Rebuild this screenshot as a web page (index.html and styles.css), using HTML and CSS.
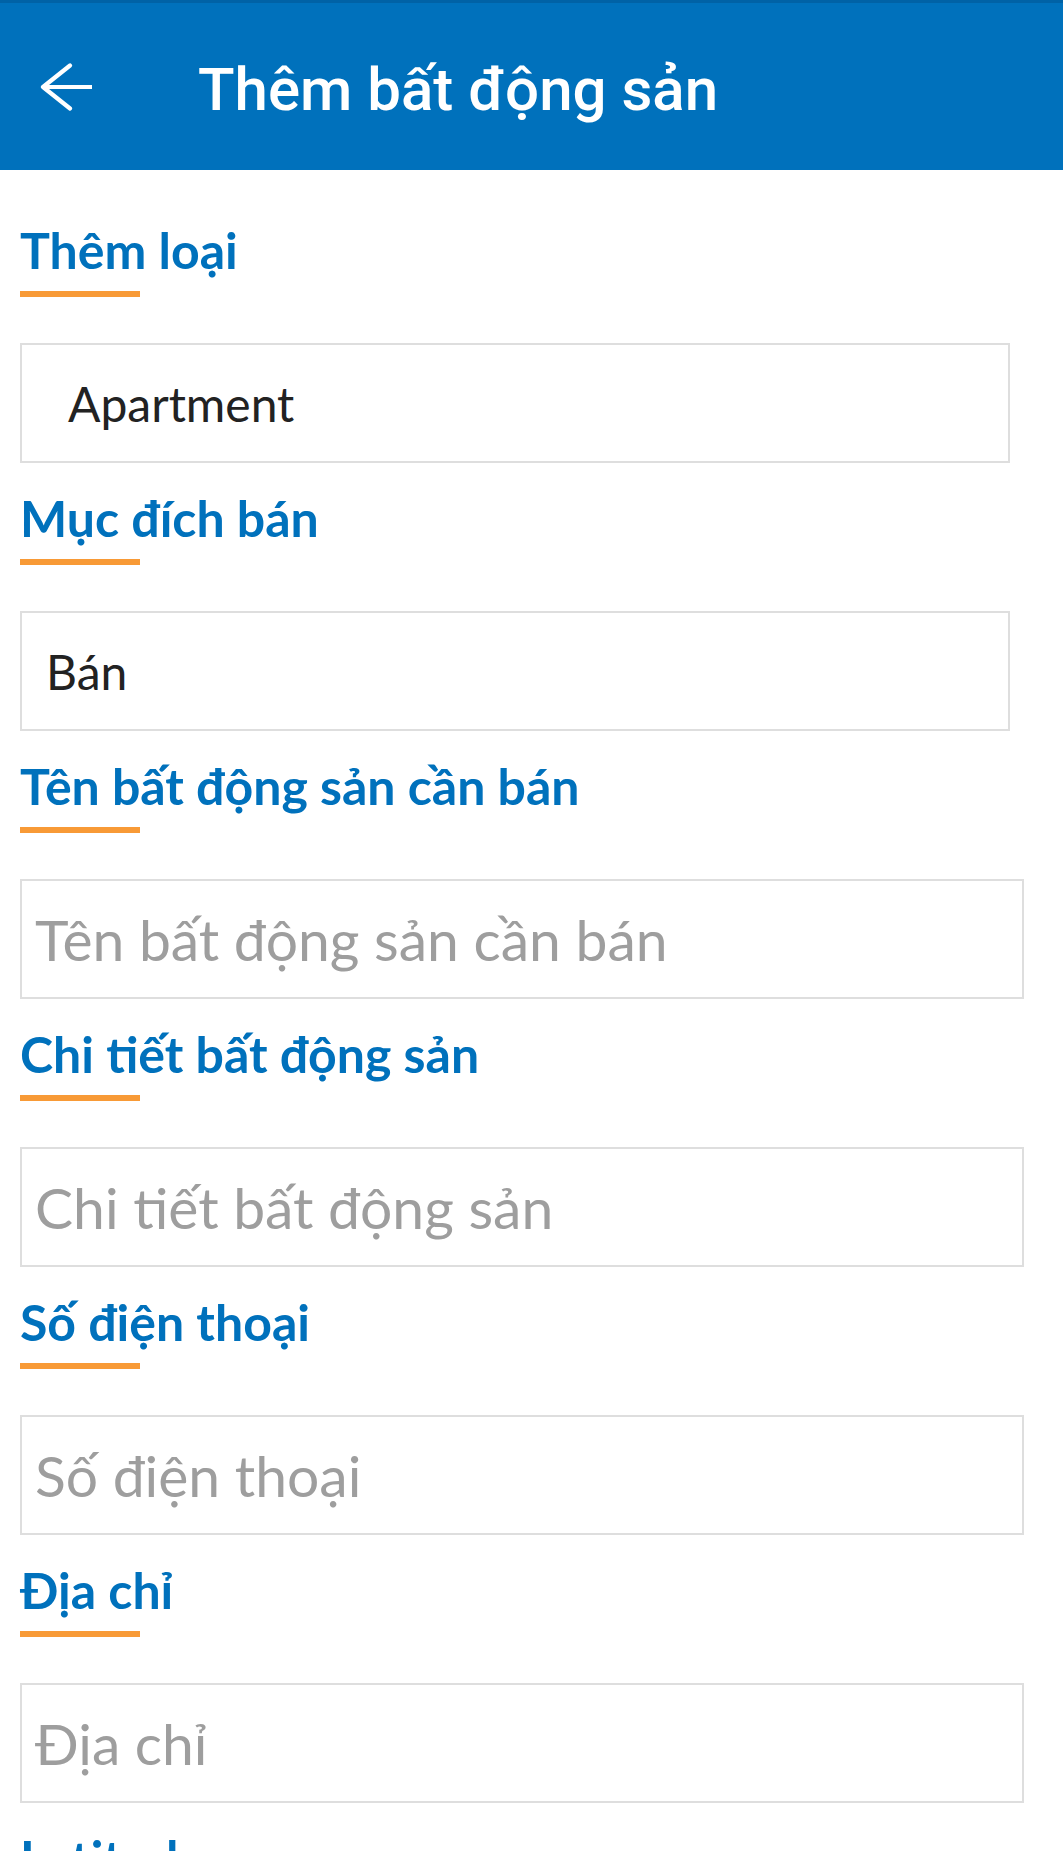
FILE: index.html
```html
<!DOCTYPE html>
<html lang="vi">
<head>
    <meta charset="UTF-8">
    <meta name="viewport" content="width=device-width, initial-scale=1.0">
    <title>Thêm bất động sản</title>
    <link rel="stylesheet" href="styles.css">
</head>
<body>
    <div class="screen">
        <header class="toolbar">
            <button class="back" aria-label="Quay lại">
                <svg width="56" height="56" viewBox="0 0 56 56">
                    <path d="M34 6.5 L7 28 L34 49.5 M8 28 H55" fill="none" stroke="#fff" stroke-width="4.2" stroke-linecap="round" stroke-linejoin="round"/>
                </svg>
            </button>
            <h1 class="title">Thêm bất động sản</h1>
        </header>

        <main class="form">
            <section class="field">
                <h2 class="label">Thêm loại</h2>
                <div class="bar"></div>
                <div class="box box-select"><span class="value value-indent">Apartment</span></div>
            </section>

            <section class="field">
                <h2 class="label">Mục đích bán</h2>
                <div class="bar"></div>
                <div class="box box-select"><span class="value">Bán</span></div>
            </section>

            <section class="field">
                <h2 class="label">Tên bất động sản cần bán</h2>
                <div class="bar"></div>
                <input class="box box-input" type="text" placeholder="Tên bất động sản cần bán">
            </section>

            <section class="field">
                <h2 class="label">Chi tiết bất động sản</h2>
                <div class="bar"></div>
                <input class="box box-input" type="text" placeholder="Chi tiết bất động sản">
            </section>

            <section class="field">
                <h2 class="label">Số điện thoại</h2>
                <div class="bar"></div>
                <input class="box box-input" type="tel" placeholder="Số điện thoại">
            </section>

            <section class="field">
                <h2 class="label">Địa chỉ</h2>
                <div class="bar"></div>
                <input class="box box-input" type="text" placeholder="Địa chỉ">
            </section>

            <section class="field">
                <h2 class="label">Latitude</h2>
                <div class="bar"></div>
                <input class="box box-input" type="text" placeholder="Latitude">
            </section>

            <section class="field">
                <h2 class="label">Longitude</h2>
                <div class="bar"></div>
                <input class="box box-input" type="text" placeholder="Longitude">
            </section>
        </main>
    </div>
</body>
</html>
```

FILE: styles.css
```css
html, body {
    margin: 0;
    height: 100%;
    background-color: #fff;
}
.screen {
    display: flex;
    flex-direction: column;
    height: 100vh;
    overflow: hidden;
}
.toolbar {
    flex: 0 0 auto;
    display: flex;
    align-items: center;
    box-sizing: border-box;
    height: 170px;
    border-top: 3px solid #0062a6;
    background-color: #0071bc;
}
.back {
    display: flex;
    margin: 0 0 0 36px;
    padding: 0;
    background: none;
    border: none;
    cursor: pointer;
}
.title {
    margin: 0 0 0 106px;
    padding-top: 6px;
    font-family: Roboto, "Liberation Sans", sans-serif;
    font-weight: 500;
    font-size: 60px;
    color: #fff;
}
.form {
    flex: 1 1 auto;
    overflow-y: auto;
    scrollbar-width: none;
    padding: 50px 0 0 20px;
}
.field {
    display: flex;
    flex-direction: column;
    align-items: flex-start;
    margin-bottom: 25px;
}
.label {
    margin: 0;
    font-family: Lato, "Open Sans", sans-serif;
    font-weight: 700;
    font-size: 50px;
    line-height: 60px;
    color: #0071bc;
}
.bar {
    width: 120px;
    height: 6px;
    margin-top: 11px;
    background-color: #f89a36;
}
.box {
    box-sizing: border-box;
    height: 120px;
    margin-top: 46px;
    border: 2px solid #dedede;
    background-color: #fff;
    font-family: Lato, "Open Sans", sans-serif;
}
.box-select {
    display: flex;
    align-items: center;
    width: 990px;
    padding-left: 24px;
}
.value {
    font-size: 48px;
    color: #222;
}
.value-indent {
    padding-left: 22px;
}
.box-input {
    width: 1004px;
    padding: 0 0 0 13px;
    font-size: 57px;
    color: #222;
    outline: none;
}
.box-input::placeholder {
    color: #9e9e9e;
}
```
